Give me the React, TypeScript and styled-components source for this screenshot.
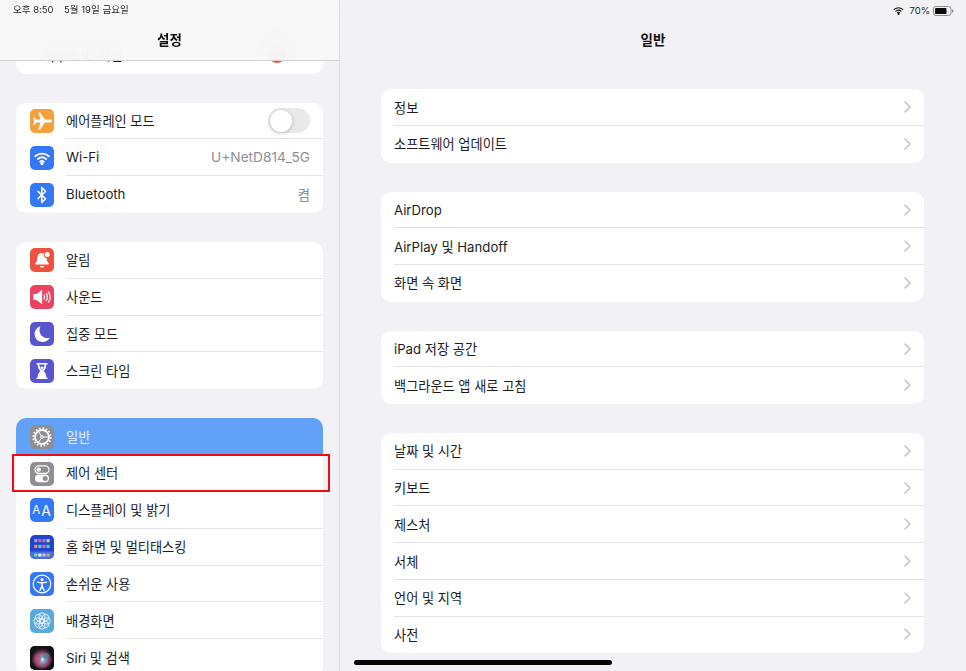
import React from 'react';
import styled, { createGlobalStyle } from 'styled-components';

const GlobalStyle = createGlobalStyle`
  html, body {
    margin: 0;
    padding: 0;
    background: #f1f1f6;
  }
  body {
    font-family: Inter, "Noto Sans CJK KR", "Noto Sans", sans-serif;
    color: #1c1c1e;
  }
`;

const ROW_HEIGHT = 36.83;
const DETAIL_ROW_HEIGHT = 36.7;

const Screen = styled.div`
  position: relative;
  display: flex;
  width: 966px;
  height: 671px;
  overflow: hidden;
  background: #f1f1f6;
`;

const Sidebar = styled.aside`
  position: relative;
  width: 339px;
  flex: none;
  height: 100%;
  overflow: hidden;
  border-right: 1px solid #dcdce0;
`;

const SidebarHeader = styled.header`
  position: absolute;
  top: 0;
  left: 0;
  right: 0;
  z-index: 2;
  height: 60px;
  background: rgba(248, 248, 248, 0.94);
  backdrop-filter: blur(12px);
  border-bottom: 1px solid #d2d2d4;
`;

const StatusText = styled.div`
  position: absolute;
  top: 3px;
  left: 13px;
  display: flex;
  gap: 10.5px;
  font-size: 9.5px;
  line-height: 13px;
  color: #1f1f21;
`;

const Title = styled.h1`
  margin: 0;
  padding-top: 30px;
  text-align: center;
  font-size: 13.5px;
  line-height: 20px;
  font-weight: 600;
  color: #111;
`;

const SidebarList = styled.div`
  display: flex;
  flex-direction: column;
  gap: 29px;
  padding: 36.7px 16px 0 16px;
`;

const Card = styled.section`
  background: #fff;
  border-radius: 10px;
`;

const Row = styled.div<{ $selected?: boolean }>`
  position: relative;
  display: flex;
  align-items: center;
  height: ${ROW_HEIGHT}px;
  padding-left: 13.5px;
  font-size: 13.2px;
  color: ${(p) => (p.$selected ? '#e4eefe' : '#1c1c1e')};
  background: ${(p) => (p.$selected ? '#62a1f8' : 'transparent')};
  border-radius: ${(p) => (p.$selected ? '10px 10px 0 0' : '0')};
`;

const IconBox = styled.span<{ $bg: string }>`
  display: flex;
  align-items: center;
  justify-content: center;
  width: 24px;
  height: 24px;
  flex: none;
  border-radius: 5px;
  background: ${(p) => p.$bg};
  color: #fff;
  overflow: hidden;
`;

const RowBody = styled.div<{ $divider?: boolean }>`
  flex: 1;
  align-self: stretch;
  display: flex;
  align-items: center;
  justify-content: space-between;
  margin-left: 12.5px;
  padding: 0 13px 1.3px 0;
  box-sizing: border-box;
  box-shadow: ${(p) => (p.$divider ? 'inset 0 -1px 0 #e4e4e7' : 'none')};
`;

const Value = styled.span`
  color: #8e8e93;
  font-size: 13.7px;
`;

const Badge = styled.span`
  width: 18px;
  height: 18px;
  margin-right: 24px;
  border-radius: 50%;
  background: #ee5141;
`;

const Toggle = styled.span`
  position: relative;
  width: 42px;
  height: 25px;
  margin-top: 1.3px;
  border-radius: 13px;
  background: #e9e9ea;
`;

const ToggleKnob = styled.span`
  position: absolute;
  top: 1.5px;
  left: 1.5px;
  width: 22px;
  height: 22px;
  border-radius: 50%;
  background: #fff;
  box-shadow: 0 1px 4px rgba(0, 0, 0, 0.22);
`;

const Highlight = styled.div`
  position: absolute;
  top: -1px;
  bottom: 0;
  left: -4px;
  right: -7px;
  border: 2px solid #ee0c12;
  pointer-events: none;
`;

const Detail = styled.main`
  position: relative;
  flex: 1;
  height: 100%;
  overflow: hidden;
`;

const DetailStatus = styled.div`
  position: absolute;
  top: 3px;
  right: 12px;
  display: flex;
  align-items: center;
  gap: 3px;
  font-size: 9.5px;
  line-height: 13px;
  color: #1f1f21;
`;

const DetailList = styled.div`
  display: flex;
  flex-direction: column;
  gap: 29px;
  padding: 39.3px 42px 0 41px;
`;

const DetailRow = styled.div<{ $divider?: boolean }>`
  display: flex;
  align-items: center;
  justify-content: space-between;
  box-sizing: border-box;
  height: ${DETAIL_ROW_HEIGHT}px;
  margin-left: 13px;
  padding: 0 13px 1px 0;
  font-size: 13.2px;
  box-shadow: ${(p) => (p.$divider ? 'inset 0 -1px 0 #e4e4e7' : 'none')};
`;

const Chevron = styled.svg`
  width: 7px;
  height: 12px;
  fill: none;
  stroke: #c5c5c8;
  stroke-width: 1.6;
  stroke-linecap: round;
  stroke-linejoin: round;
`;

const HomeBar = styled.div`
  position: absolute;
  left: 354px;
  bottom: 6px;
  width: 258px;
  height: 5px;
  border-radius: 3px;
  background: #050505;
  z-index: 3;
`;

const Glyph = styled.svg`
  width: 24px;
  height: 24px;
  display: block;
`;

const TextA = styled.span`
  font-family: Inter, sans-serif;
  font-size: 14px;
  font-weight: 400;
  color: #fff;
`;

const TextASmall = styled(TextA)`
  font-size: 11.5px;
  margin-right: 1px;
`;

const PlaneIcon = () => (
  <Glyph viewBox="0 0 24 24" fill="#fff">
    <path d="M22 12c0-1-1.100-1.600-2.500-1.600h-4.700L10.200 3.400H8.300l2.300 7H6.300L4.600 8.200H3.200l1 3.800-1 3.800h1.400l1.700-2.200h4.300l-2.300 7h1.900l4.600-7h4.700C20.900 13.600 22 13 22 12z" />
  </Glyph>
);

const WifiGlyph = ({ stroke = '#fff', size = 24 }: { stroke?: string; size?: number }) => (
  <svg width={size} height={size} viewBox="0 0 24 24" fill="none" stroke={stroke} strokeWidth="1.9" strokeLinecap="round">
    <path d="M5.200 10.200c3.900-3.400 9.700-3.400 13.600 0" />
    <path d="M7.900 13c2.400-2 5.800-2 8.200 0" />
    <path d="M10.400 15.600c1-.7 2.200-.7 3.200 0" />
    <circle cx="12" cy="17.600" r=".7" fill={stroke} />
  </svg>
);

const BluetoothIcon = () => (
  <Glyph viewBox="0 0 24 24" fill="none" stroke="#fff" strokeWidth="1.500" strokeLinejoin="round" strokeLinecap="round">
    <path d="M8 8.400l7.600 7.300-3.800 3.900V4.400l3.800 3.900L8 15.600" />
  </Glyph>
);

const BellIcon = () => (
  <Glyph viewBox="0 0 24 24" fill="#fff">
    <path d="M12 5c-3 0-4.600 2.200-4.700 5-.1 2.600-.7 4-2.100 5.300-.5.5-.2 1.300.5 1.300h12.600c.7 0 1-.8.5-1.300-1.400-1.300-2-2.700-2.100-5.300C16.600 7.200 15 5 12 5z" />
    <path d="M10 18h4c-.2 1-1 1.600-2 1.600S10.200 19 10 18z" />
    <circle cx="17.200" cy="6.600" r="3.600" fill="#ef5140" />
    <circle cx="17.200" cy="6.600" r="2.500" />
  </Glyph>
);

const SoundIcon = () => (
  <Glyph viewBox="0 0 24 24" fill="none" stroke="#fff" strokeWidth="1.200" strokeLinecap="round">
    <path d="M4 9.500h3l4.500-3.500v12L7 14.500H4z" fill="#fff" />
    <path d="M14 10c.8 1.200.8 2.800 0 4" />
    <path d="M16.200 8.400c1.500 2.200 1.500 5 0 7.200" />
    <path d="M18.400 6.800c2.200 3.200 2.200 7.200 0 10.400" />
  </Glyph>
);

const MoonIcon = () => (
  <Glyph viewBox="0 0 24 24" fill="#fff">
    <path d="M10.500 4.200C7 5.200 4.600 8.300 4.600 12c0 4.400 3.600 8 8 8 3.100 0 5.800-1.700 7.100-4.300-.7.200-1.400.3-2.200.3-4.400 0-8-3.400-8-7.800 0-1.500.3-2.800 1-4z" />
  </Glyph>
);

const HourglassIcon = () => (
  <Glyph viewBox="0 0 24 24" fill="#fff">
    <path d="M6.500 4h11v1.600h-1.200c0 2.900-1 4.900-2.700 6.400 1.700 1.500 2.700 3.500 2.700 6.400h1.200V20h-11v-1.600h1.200c0-2.900 1-4.900 2.700-6.400C8.700 10.500 7.700 8.500 7.700 5.600H6.500z" />
    <path d="M9.400 5.600c0 2.500 1 4.300 2.600 5.400 1.600-1.100 2.600-2.900 2.600-5.400z" fill="#5856ce" />
    <path d="M10.200 7.800h3.600c-.4 1.200-1 2-1.800 2.600-.8-.6-1.400-1.400-1.800-2.600z" fill="#fff" />
  </Glyph>
);

const GearIcon = () => (
  <Glyph viewBox="0 0 24 24" fill="none" stroke="#fff">
    <circle cx="12" cy="12" r="7" strokeWidth="1.800" />
    <circle cx="12" cy="12" r="8.800" strokeWidth="1.700" strokeDasharray="1.700 1.760" />
    <circle cx="12" cy="12" r="1.300" strokeWidth="1" />
    <path d="M13.300 12H18.500M11.300 10.900L8.500 6.500M11.300 13.100L8.500 17.500" strokeWidth="1" />
  </Glyph>
);

const SwitchesIcon = () => (
  <Glyph viewBox="0 0 24 24">
    <rect x="5" y="3.800" width="14" height="7.600" rx="3.800" fill="none" stroke="#fff" strokeWidth="1.200" />
    <circle cx="8.800" cy="7.600" r="2.200" fill="#fff" />
    <rect x="5" y="12.600" width="14" height="7.600" rx="3.800" fill="#fff" />
    <circle cx="15.200" cy="16.400" r="2.500" fill="#8e8e93" />
  </Glyph>
);

const HOME_DOTS = [
  ['#9a9aee', '#e8626a', '#ab70ee', '#ecc94e'],
  ['#f4923e', '#4fcaee', '#ea5fb6', '#58d870'],
];

const HOME_DOCK = ['#74e6a6', '#eeeef8', '#c0cef6', '#ee9e5e'];

const HomeIcon = () => (
  <Glyph viewBox="0 0 24 24">
    <rect x="0" y="16.500" width="24" height="7.500" fill="#4a6fe0" />
    {HOME_DOTS.map((line, y) =>
      line.map((fill, x) => (
        <rect key={`${x}-${y}`} x={4.200 + x * 4.100} y={4 + y * 5.800} width="3.200" height="3.200" rx=".6" fill={fill} />
      )),
    )}
    {HOME_DOCK.map((fill, x) => (
      <rect key={fill} x={4.200 + x * 4.100} y="18.400" width="3.200" height="3.200" rx=".6" fill={fill} />
    ))}
  </Glyph>
);

const AccessIcon = () => (
  <Glyph viewBox="0 0 24 24" fill="none" stroke="#fff" strokeLinecap="round">
    <circle cx="12" cy="12" r="8.800" strokeWidth="1.200" />
    <circle cx="12" cy="7.500" r="1.500" fill="#fff" stroke="none" />
    <path d="M7.500 10.100c3 .8 6 .8 9 0" strokeWidth="1.400" />
    <path d="M12 11v3M12 14l-2 4.200M12 14l2 4.200" strokeWidth="1.500" />
  </Glyph>
);

const FLOWER_ANGLES = [0, 45, 90, 135, 180, 225, 270, 315];

const FlowerIcon = () => (
  <Glyph viewBox="0 0 24 24" fill="none" stroke="#fff" strokeWidth=".9" opacity=".92">
    {FLOWER_ANGLES.map((a) => (
      <circle key={a} cx="12" cy="7" r="3.200" transform={`rotate(${a} 12 12)`} />
    ))}
    <circle cx="12" cy="12" r="2" />
  </Glyph>
);

const SiriIcon = () => (
  <Glyph viewBox="0 0 24 24">
    <defs>
      <radialGradient id="siriCore" cx="50%" cy="55%" r="50%">
        <stop offset="0%" stopColor="#eef4f8" />
        <stop offset="28%" stopColor="#6fa8c8" />
        <stop offset="62%" stopColor="#a5446f" />
        <stop offset="100%" stopColor="#1b1a20" />
      </radialGradient>
    </defs>
    <rect width="24" height="24" fill="#111216" />
    <circle cx="12" cy="12.500" r="10.500" fill="url(#siriCore)" />
    <ellipse cx="8" cy="13" rx="3.500" ry="4" fill="#c2406a" opacity=".55" />
    <ellipse cx="16" cy="10" rx="3" ry="3" fill="#3c8f8f" opacity=".6" />
  </Glyph>
);

type SideItem = {
  label: string;
  bg?: string;
  icon?: React.ReactNode;
  value?: string;
  toggle?: boolean;
  badge?: boolean;
  selected?: boolean;
  marked?: boolean;
};

const sideGroups: SideItem[][] = [
  [{ label: 'Apple ID 제안', badge: true }],
  [
    { label: '에어플레인 모드', bg: '#f4a13a', icon: <PlaneIcon />, toggle: true },
    { label: 'Wi-Fi', bg: '#3478f6', icon: <WifiGlyph />, value: 'U+NetD814_5G' },
    { label: 'Bluetooth', bg: '#3478f6', icon: <BluetoothIcon />, value: '켬' },
  ],
  [
    { label: '알림', bg: '#ef5140', icon: <BellIcon /> },
    { label: '사운드', bg: '#ec4460', icon: <SoundIcon /> },
    { label: '집중 모드', bg: '#5856ce', icon: <MoonIcon /> },
    { label: '스크린 타임', bg: '#5856ce', icon: <HourglassIcon /> },
  ],
  [
    { label: '일반', bg: '#8e8e93', icon: <GearIcon />, selected: true },
    { label: '제어 센터', bg: '#8e8e93', icon: <SwitchesIcon />, marked: true },
    {
      label: '디스플레이 및 밝기',
      bg: '#3478f6',
      icon: (
        <>
          <TextASmall>A</TextASmall>
          <TextA>A</TextA>
        </>
      ),
    },
    { label: '홈 화면 및 멀티태스킹', bg: '#2144d0', icon: <HomeIcon /> },
    { label: '손쉬운 사용', bg: '#3478f6', icon: <AccessIcon /> },
    { label: '배경화면', bg: '#5aaadb', icon: <FlowerIcon /> },
    { label: 'Siri 및 검색', bg: '#111216', icon: <SiriIcon /> },
  ],
];

const detailGroups: string[][] = [
  ['정보', '소프트웨어 업데이트'],
  ['AirDrop', 'AirPlay 및 Handoff', '화면 속 화면'],
  ['iPad 저장 공간', '백그라운드 앱 새로 고침'],
  ['날짜 및 시간', '키보드', '제스처', '서체', '언어 및 지역', '사전'],
];

const App: React.FC = () => {
  return (
    <Screen>
      <GlobalStyle />
      <Sidebar>
        <SidebarHeader>
          <StatusText>
            <span>오후 8:50</span>
            <span>5월 19일 금요일</span>
          </StatusText>
          <Title>설정</Title>
        </SidebarHeader>
        <SidebarList>
          {sideGroups.map((group, g) => (
            <Card key={g}>
              {group.map((item, i) => (
                <Row key={item.label} $selected={item.selected}>
                  {item.icon && <IconBox $bg={item.bg || '#8e8e93'}>{item.icon}</IconBox>}
                  <RowBody $divider={i < group.length - 1 && !item.selected && !item.marked}>
                    <span>{item.label}</span>
                    {item.value && <Value>{item.value}</Value>}
                    {item.badge && <Badge />}
                    {item.toggle && (
                      <Toggle>
                        <ToggleKnob />
                      </Toggle>
                    )}
                  </RowBody>
                  {item.marked && <Highlight />}
                </Row>
              ))}
            </Card>
          ))}
        </SidebarList>
      </Sidebar>
      <Detail>
        <DetailStatus>
          <WifiGlyph stroke="#1c1c1e" size={15} />
          <span>70%</span>
          <svg width="21" height="10" viewBox="0 0 21 10">
            <rect x=".5" y=".5" width="17.500" height="9" rx="2.500" fill="none" stroke="#8e8e93" />
            <rect x="2" y="2" width="11.500" height="6" rx="1" fill="#0a0a0a" />
            <path d="M19 3.300c1 .3 1.500.9 1.500 1.700s-.5 1.400-1.500 1.700z" fill="#8e8e93" />
          </svg>
        </DetailStatus>
        <Title>일반</Title>
        <DetailList>
          {detailGroups.map((group, g) => (
            <Card key={g}>
              {group.map((label, i) => (
                <DetailRow key={label} $divider={i < group.length - 1}>
                  <span>{label}</span>
                  <Chevron viewBox="0 0 7 12">
                    <path d="M1 1l5 5-5 5" />
                  </Chevron>
                </DetailRow>
              ))}
            </Card>
          ))}
        </DetailList>
      </Detail>
      <HomeBar />
    </Screen>
  );
};

export default App;
